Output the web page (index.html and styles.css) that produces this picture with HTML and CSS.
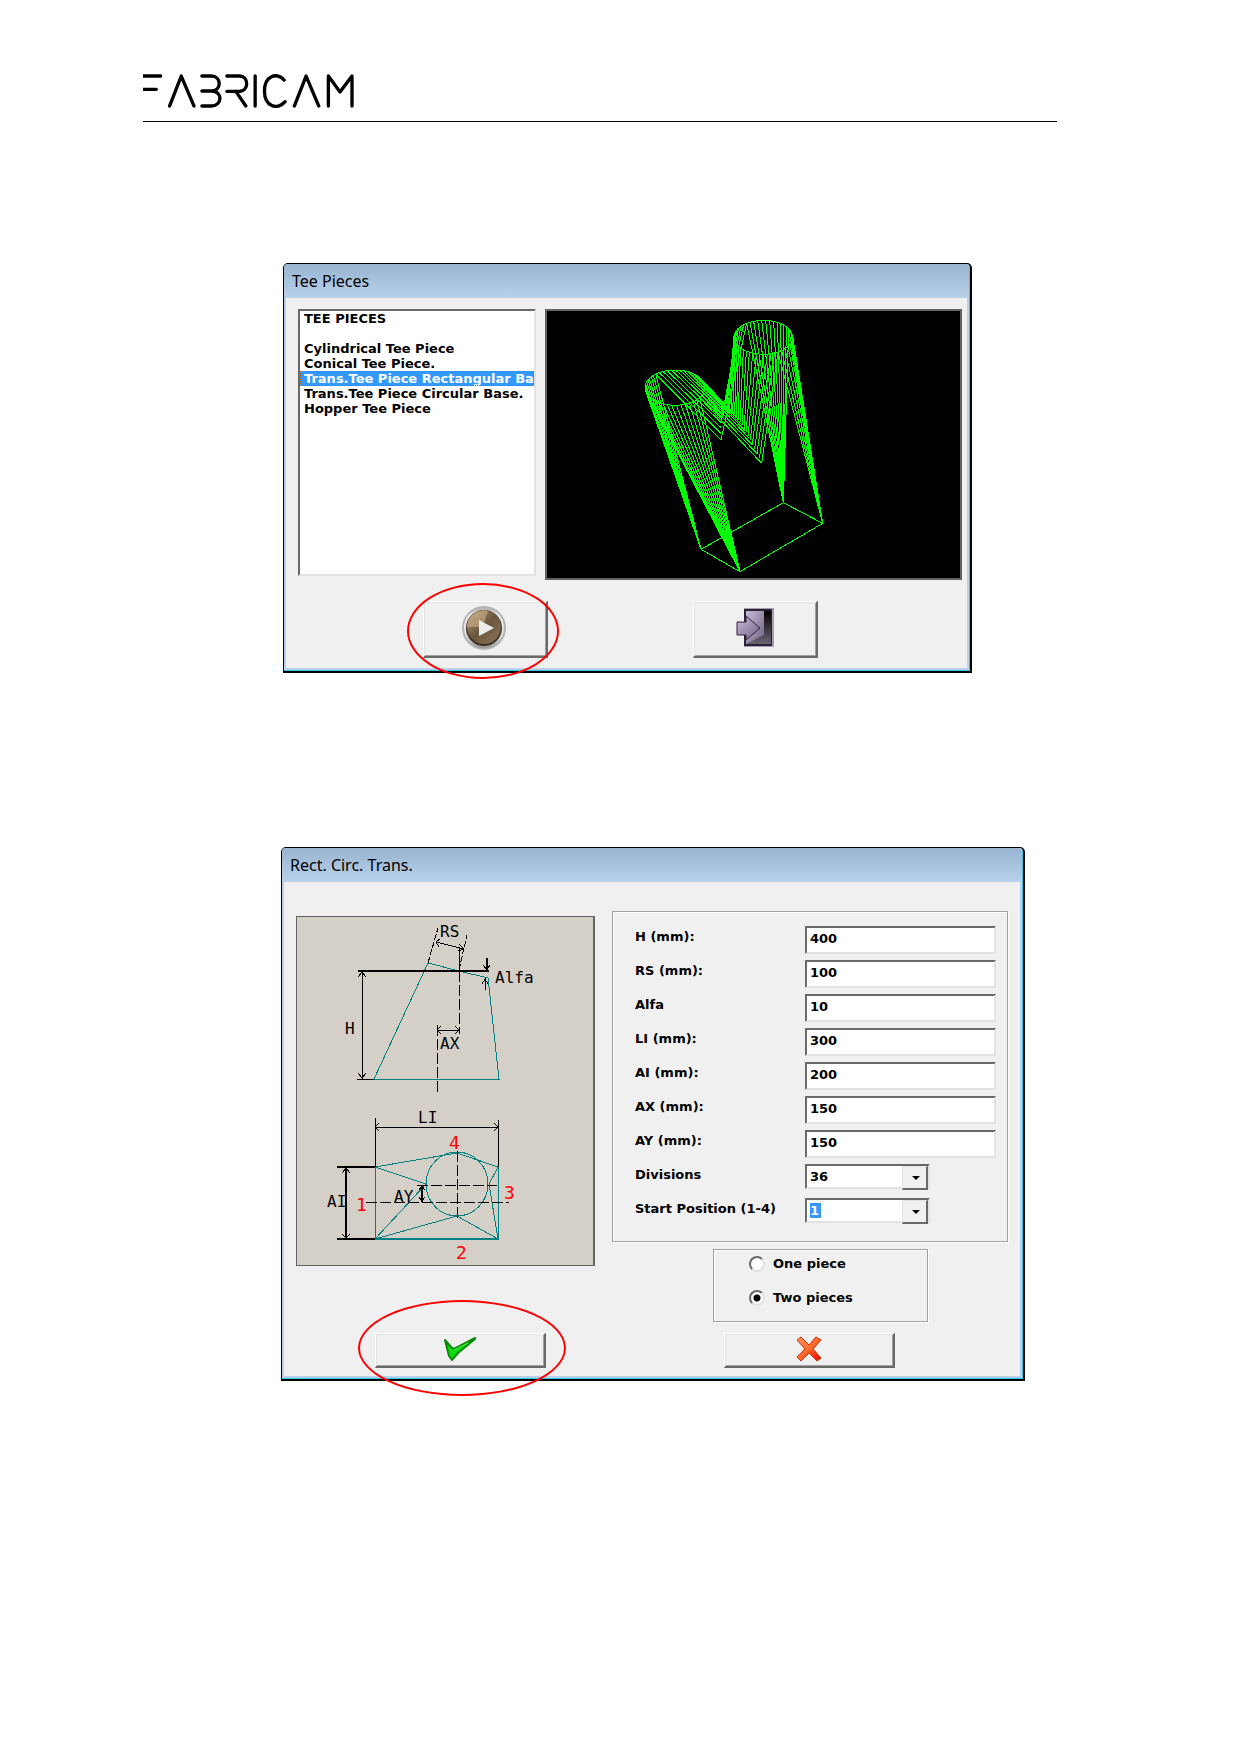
FILE: index.html
```html
<!DOCTYPE html>
<html lang="en">
<head>
<meta charset="utf-8">
<title>Fabricam - Tee Pieces</title>
<link rel="stylesheet" href="styles.css">
</head>
<body>
<header class="page-header">
  <svg class="logo" viewBox="39 41 634 102" role="img" aria-label="Fabricam">
    <path d="M39 47H92M39 87H79M119 137L154 47L192 137M216 47H244C276 47 276 92 244 92H216M244 92C280 92 278 137 244 137H216M291 47H328C358 47 358 93 328 93H291M318 93L348 137M376 47V137M463 59C440 34 404 47 404 92C404 139 442 150 466 124M494 137L529 47L567 137M596 137V47L631 95L667 47V137"/>
  </svg>
</header>
<main>
  <section class="dialog dialog-tee" aria-labelledby="tee-title">
    <h2 class="title-bar" id="tee-title">Tee Pieces</h2>
    <div class="tee-body">
      <div class="tee-panes">
        <select class="piece-list" size="7" aria-label="Tee pieces">
          <option>TEE PIECES</option>
          <option disabled></option>
          <option>Cylindrical Tee Piece</option>
          <option>Conical Tee Piece.</option>
          <option selected>Trans.Tee Piece Rectangular Base.</option>
          <option>Trans.Tee Piece Circular Base.</option>
          <option>Hopper Tee Piece</option>
        </select>
        <div class="preview">
          <svg viewBox="-219 3 1239 801" role="img" aria-label="Wireframe of the selected piece">
            <path id="wireframe"/>
          </svg>
        </div>
      </div>
      <div class="tee-actions">
        <div class="marked">
          <button class="btn btn-tall" type="button" aria-label="Run">
            <svg width="46" height="46" viewBox="0 0 46 46">
              <defs>
                <linearGradient id="ring" x1="0" y1="0" x2="0" y2="1"><stop offset="0" stop-color="#a8a8a8"/><stop offset=".2" stop-color="#f4f4f4"/><stop offset=".7" stop-color="#dcdcdc"/><stop offset="1" stop-color="#8c8c8c"/></linearGradient>
                <linearGradient id="disc" x1="0" y1="0" x2="1" y2="1"><stop offset="0" stop-color="#b99a72"/><stop offset=".5" stop-color="#6a563e"/><stop offset="1" stop-color="#8c7658"/></linearGradient>
              </defs>
              <circle cx="22" cy="23" r="21" fill="url(#ring)" stroke="#b4b4b4" stroke-width="2"/>
              <circle cx="22" cy="23" r="18" fill="#3c3024"/>
              <circle cx="22" cy="22" r="17" fill="url(#disc)"/>
              <path d="M5 22A17 17 0 0 1 26 6L21 22Z" fill="#cbb08a" opacity=".6"/>
              <path d="M17 15L32 23L17 31Z" fill="#ececec"/>
            </svg>
          </button>
          <span class="mark mark-run"></span>
        </div>
        <button class="btn btn-tall" type="button" aria-label="Exit">
          <svg width="38" height="40" viewBox="0 0 38 40">
            <defs>
              <linearGradient id="dark" x1="0" y1="0" x2="0" y2="1"><stop offset="0" stop-color="#000"/><stop offset="1" stop-color="#6b6274"/></linearGradient>
              <linearGradient id="door" x1="0" y1="0" x2="1" y2="1"><stop offset="0" stop-color="#c9bcd6"/><stop offset="1" stop-color="#6f6182"/></linearGradient>
            </defs>
            <path d="M8 0H38V39H8Z" fill="#a79fae"/>
            <path d="M8 1H36V38H8Z" fill="#2a2038"/>
            <path d="M10 3H35V36H10Z" fill="url(#dark)"/>
            <path d="M10 3H28V27L10 36Z" fill="url(#door)"/>
            <path d="M1 14H10V8L24 20L10 32V27H1Z" fill="url(#door)" stroke="#2a2038" stroke-width="1"/>
          </svg>
        </button>
      </div>
    </div>
  </section>

  <section class="dialog dialog-trans" aria-labelledby="trans-title">
    <h2 class="title-bar" id="trans-title">Rect. Circ. Trans.</h2>
    <form class="trans-body">
      <div class="trans-left">
        <div class="figure">
          <svg viewBox="0 0 296 348" role="img" aria-label="Dimensions of the transition">
            <g class="teal">
              <path d="M131 46L162 54L191 61L202 162H77Z"/>
              <path d="M78 250V322M201 250V322"/>
              <path d="M78 250L160 236L201 250L192 267L201 322L160 299L78 322L129 267Z"/>
              <ellipse cx="160" cy="267" rx="31" ry="32"/>
              <path class="thick" d="M78 322H202"/>
            </g>
            <g class="ink">
              <path class="thick" d="M61 54H192M49 250V322M40 250H78M40 322H78M125 268V285M190 41V54"/>
              <path d="M65 54V162M60 162H77M162 31V54M139 25L167 32M140 113H162M188 61V73M78 201V250M201 203V250M78 210H201"/>
              <path d="M61 60L65 55L69 60M61 156L65 161L69 156M144 109L140 113L144 117M158 109L162 113L158 117M143 22L139 25L142 30M162 27L167 32L161 34M186 48L190 53L193 48M185 67L188 62L191 67M82 206L78 210L82 214M197 206L201 210L197 214M45 256L49 251L53 256M45 317L49 321L53 317M122 273L125 269L128 273M122 280L125 284L128 280"/>
              <path class="dash" d="M131 46L141 11M162 53L170 18"/>
              <path class="dash-long" d="M162 54V117M140 108V176M160 234V304M120 268H200M69 285H212"/>
            </g>
            <g class="cad">
              <text x="143" y="20">RS</text>
              <text x="198" y="66">Alfa</text>
              <text x="48" y="117">H</text>
              <text x="143" y="132">AX</text>
              <text x="121" y="206">LI</text>
              <text x="97" y="285">AY</text>
              <text x="30" y="290">AI</text>
            </g>
            <g class="cad cad-red">
              <text x="59" y="294">1</text>
              <text x="159" y="342">2</text>
              <text x="207" y="282">3</text>
              <text x="152" y="232">4</text>
            </g>
          </svg>
        </div>
        <div class="marked marked-ok">
          <button class="btn btn-wide" type="button" aria-label="OK">
            <svg width="32" height="24" viewBox="0 0 32 24">
              <path d="M1 3L7 10L10 12L31 1L31 2L14 16L8 23L5 19Z" fill="#0ddc0d" stroke="#078a07" stroke-width="2" stroke-linejoin="round"/>
              <path d="M10 13L24 6" stroke="#5cf05c" stroke-width="1"/>
            </svg>
          </button>
          <span class="mark mark-ok"></span>
        </div>
      </div>
      <div class="trans-right">
        <div class="group fields">
          <label for="h">H (mm):</label><input class="field" id="h" type="text" value="400">
          <label for="rs">RS (mm):</label><input class="field" id="rs" type="text" value="100">
          <label for="alfa">Alfa</label><input class="field" id="alfa" type="text" value="10">
          <label for="li">LI (mm):</label><input class="field" id="li" type="text" value="300">
          <label for="ai">AI (mm):</label><input class="field" id="ai" type="text" value="200">
          <label for="ax">AX (mm):</label><input class="field" id="ax" type="text" value="150">
          <label for="ay">AY (mm):</label><input class="field" id="ay" type="text" value="150">
          <label for="div">Divisions</label>
          <div class="combo"><select class="field" id="div"><option>36</option></select></div>
          <label for="start">Start Position (1-4)</label>
          <div class="combo"><select class="field picked" id="start"><option>1</option><option>2</option><option>3</option><option>4</option></select></div>
        </div>
        <div class="group radios">
          <label><input type="radio" name="pieces">One piece</label>
          <label><input type="radio" name="pieces" checked>Two pieces</label>
        </div>
        <button class="btn btn-wide btn-cancel" type="button" aria-label="Cancel">
          <svg width="26" height="26" viewBox="0 0 26 26">
            <defs><linearGradient id="cross" x1="0" y1="0" x2="1" y2="1"><stop offset="0" stop-color="#ff9a5c"/><stop offset=".5" stop-color="#ff6a2a"/><stop offset="1" stop-color="#e80000"/></linearGradient></defs>
            <path d="M5 1L13 9L20 1L25 4L17 13L25 22L21 25L13 17L5 25L1 21L9 13L1 4Z" fill="url(#cross)" stroke="#d42a08" stroke-width="1" stroke-linejoin="round"/>
          </svg>
        </button>
      </div>
    </form>
  </section>
</main>
<script src="wireframe.js"></script>
</body>
</html>
```
FILE: styles.css
```css
* { box-sizing: border-box; }

body {
  margin: 0;
  min-height: 100vh;
  background: #fff;
  color: #000;
  font: bold 13px/16px "DejaVu Sans", Verdana, sans-serif;
}

.page-header {
  margin: 0 183px 0 143px;
  padding: 74px 0 13px;
  border-bottom: 1px solid #000;
}

.logo {
  display: block;
  width: 211px;
  height: 34px;
  fill: none;
  stroke: #000;
  stroke-width: 10;
  stroke-linecap: round;
  stroke-linejoin: round;
}

main { padding: 0 200px 80px 281px; }

.dialog {
  border: solid #000;
  border-width: 1px 2px 2px 1px;
  border-radius: 5px 5px 0 0;
  padding: 0 3px 3px 2px;
  background: #b9d1ea;
  box-shadow: inset -1px -1px 0 #35c5e8;
}

.dialog-tee { max-width: 689px; margin: 141px 0 0 2px; }
.dialog-trans { max-width: 744px; margin-top: 174px; }

.title-bar {
  margin: 0 -2px;
  padding: 0 8px;
  border-radius: 4px 4px 0 0;
  background: linear-gradient(#99b4d1, #b9d1ea);
  font: 16px/34px "Noto Sans", "Open Sans", sans-serif;
}

.tee-body { padding: 11px 5px 10px 12px; background: #f0f0f0; }

.tee-panes {
  display: grid;
  grid-template-columns: 238px 1fr;
  gap: 9px;
  align-items: start;
}

.piece-list {
  width: 100%;
  height: 267px;
  padding: 0;
  overflow: hidden;
  border: 2px solid;
  border-color: #696969 #e3e3e3 #e3e3e3 #696969;
  border-radius: 0;
  outline: 0;
  background: #fff;
  color: #000;
  font: inherit;
}

.piece-list option {
  height: 15px;
  min-height: 15px;
  padding: 0 4px;
  font: bold 13px/15px "DejaVu Sans", Verdana, sans-serif;
  overflow: hidden;
}

.piece-list option:checked {
  background: linear-gradient(#39f, #39f);
  -webkit-text-fill-color: #fff;
  outline: 1px dotted #c60;
  outline-offset: -1px;
}

.preview { height: 271px; border: 2px solid #646464; background: #000; }
.preview svg { display: block; width: 100%; height: 100%; }

#wireframe {
  fill: none;
  stroke: #0f0;
  stroke-width: 3;
  shape-rendering: crispEdges;
}

.tee-actions { display: flex; gap: 145px; margin-top: 21px; padding-left: 125px; }

.btn {
  display: flex;
  justify-content: center;
  align-items: center;
  padding: 0 0 2px;
  border: solid;
  border-width: 1px 2px 2px 1px;
  border-color: #fff #696969 #696969 #fff;
  border-radius: 0;
  background: #f0f0f0;
  box-shadow: inset 1px 1px 0 #e3e3e3, inset -1px -1px 0 #a0a0a0;
}

.btn-tall { width: 125px; height: 57px; }
.btn-wide { width: 171px; height: 35px; }

.marked { position: relative; }

.mark {
  position: absolute;
  border: 2px solid #f00;
  border-radius: 50%;
  pointer-events: none;
}

.mark-run { left: -16px; top: -18px; width: 152px; height: 96px; }
.mark-ok { left: -17px; top: -33px; width: 208px; height: 96px; }

.trans-body {
  display: grid;
  grid-template-columns: 299px 1fr;
  gap: 17px;
  padding: 29px 12px 8px;
  background: #f0f0f0;
}

.figure {
  margin-top: 5px;
  border: solid #646464;
  border-width: 1px 2px 1px 1px;
  background: #d4d0c8;
}

.figure svg { display: block; width: 100%; height: 348px; }
.teal, .ink { fill: none; stroke-width: 1; shape-rendering: crispEdges; }
.teal { stroke: #008080; }
.ink { stroke: #000; }
.thick { stroke-width: 2; }
.dash { stroke-dasharray: 6 2; }
.dash-long { stroke-dasharray: 11 3; }
.cad { font: 16px "DejaVu Sans Mono", monospace; }
.cad-red { font-size: 18px; fill: #f00; }

.marked-ok { margin: 67px 0 0 79px; }

.group {
  border: 1px solid #a0a0a0;
  box-shadow: inset 1px 1px 0 #fff, 1px 1px 0 #fff;
}

.fields {
  display: grid;
  grid-template-columns: 170px 1fr;
  grid-auto-rows: 28px;
  row-gap: 6px;
  align-items: start;
  min-height: 331px;
  padding: 14px 11px 0 22px;
}

.fields label { line-height: 22px; white-space: nowrap; }

.field {
  display: block;
  width: 100%;
  height: 28px;
  padding: 0 0 4px 3px;
  border: 2px solid;
  border-color: #696969 #e3e3e3 #e3e3e3 #696969;
  border-radius: 0;
  outline: 0;
  background: #fff;
  color: #000;
  font: inherit;
  appearance: none;
}

.combo { position: relative; width: 125px; }
.combo .field { height: 25px; padding-bottom: 0; }

.combo::before {
  content: "";
  position: absolute;
  right: 2px;
  top: 2px;
  width: 23px;
  height: 21px;
  border: solid;
  border-width: 1px 2px 2px 1px;
  border-color: #e3e3e3 #696969 #696969 #e3e3e3;
  background: #f0f0f0;
  pointer-events: none;
}

.combo::after {
  content: "";
  position: absolute;
  right: 10px;
  top: 12px;
  border: 4px solid transparent;
  border-top-color: #000;
  border-bottom: 0;
  pointer-events: none;
}

.picked {
  background: linear-gradient(#39f, #39f) 3px 3px / 11px 15px no-repeat #fff;
  color: #fff;
}

.radios {
  display: grid;
  gap: 18px;
  width: 215px;
  height: 73px;
  margin: 7px 0 0 101px;
  padding: 6px 0 0 35px;
  align-content: start;
}

.radios label { display: flex; align-items: center; gap: 8px; }

.radios input {
  width: 16px;
  height: 16px;
  margin: 0;
  border: 2px solid;
  border-color: #696969 #e3e3e3 #e3e3e3 #696969;
  border-radius: 50%;
  background: #fff;
  appearance: none;
}

.radios input:checked { background: radial-gradient(circle, #000 3px, #fff 4px); }
.btn-cancel { margin: 11px 0 0 112px; }
```
FILE: wireframe.js
```javascript
// Two round tubes that meet in a valley curve and fan out to a rectangular base.
const left = { cx: 165, cy: 233, rx: 90, ry: 53 };
const right = { cx: 430, cy: 82, rx: 88, ry: 51 };
const A = [243, 718], B = [360, 785], C = [608, 640], D = [490, 578];

const on = (e, deg) => {
  const a = deg * Math.PI / 180;
  return [e.cx + e.rx * Math.cos(a), e.cy + e.ry * Math.sin(a)];
};
const valley = t => [[303, 298, 330, 425], [390, 250, 260, 460]].map(p =>
  p[0] * (1 - t) ** 3 + 3 * p[1] * t * (1 - t) ** 2 + 3 * p[2] * t * t * (1 - t) + p[3] * t ** 3);

let d = "";
const line = (p, q) => { d += `M${p.map(Math.round)}L${q.map(Math.round)}`; };
const fan = (e, from, to, n, target) => {
  for (let i = 0; i <= n; i++) {
    line(on(e, from + (to - from) * i / n), target(i / n));
  }
};

for (const e of [left, right]) {
  for (let a = 0; a < 360; a += 10) line(on(e, a), on(e, a + 10));
}
fan(left, 175, 230, 9, () => A);
fan(left, 175, 35, 16, () => B);
fan(left, 230, 395, 20, valley);
fan(right, 235, 330, 12, () => D);
fan(right, -30, 60, 10, () => C);
fan(right, 235, 60, 24, t => valley(t ** 0.6));
line(A, B); line(B, C); line(C, D); line(D, A);

document.getElementById("wireframe").setAttribute("d", d);
```
